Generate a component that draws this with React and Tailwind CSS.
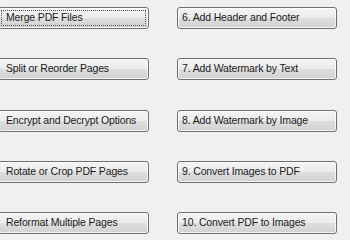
import React from "react";

const left = [
  "Merge PDF Files",
  "Split or Reorder Pages",
  "Encrypt and Decrypt Options",
  "Rotate or Crop PDF Pages",
  "Reformat Multiple Pages",
];
const right = [
  "6. Add Header and Footer",
  "7. Add Watermark by Text",
  "8. Add Watermark by Image",
  "9. Convert Images to PDF",
  "10. Convert PDF to Images",
];

function Btn({ label, focus, pl }) {
  return (
    <div
      className={`relative h-[22px] rounded-[3px] border border-[#707070] bg-[linear-gradient(to_bottom,#f4f4f4_0%,#ececec_48%,#dedede_52%,#d2d2d2_100%)] shadow-[inset_0_0_0_1px_rgba(255,255,255,0.75)] flex items-center ${pl} text-[10.5px] tracking-[-0.15px] text-[#1a1a1a] whitespace-nowrap`}
    >
      {focus && (
        <div className="absolute inset-[2px] border border-dotted border-[#555]" />
      )}
      <span className="relative">{label}</span>
    </div>
  );
}

export default function App() {
  return (
    <div
      className="w-[350px] h-[240px] overflow-hidden bg-[#f0f0f0] pt-[7px]"
      style={{ fontFamily: '"Liberation Sans", Arial, sans-serif' }}
    >
      <div className="flex ml-[-2px] gap-[28px]">
        <div className="w-[151px] flex flex-col gap-[29.25px]">
          {left.map((l, i) => (
            <Btn key={l} label={l} focus={i === 0} pl="pl-[7px]" />
          ))}
        </div>
        <div className="w-[160px] flex flex-col gap-[29.25px]">
          {right.map((l) => (
            <Btn key={l} label={l} pl="pl-[4px]" />
          ))}
        </div>
      </div>
    </div>
  );
}
